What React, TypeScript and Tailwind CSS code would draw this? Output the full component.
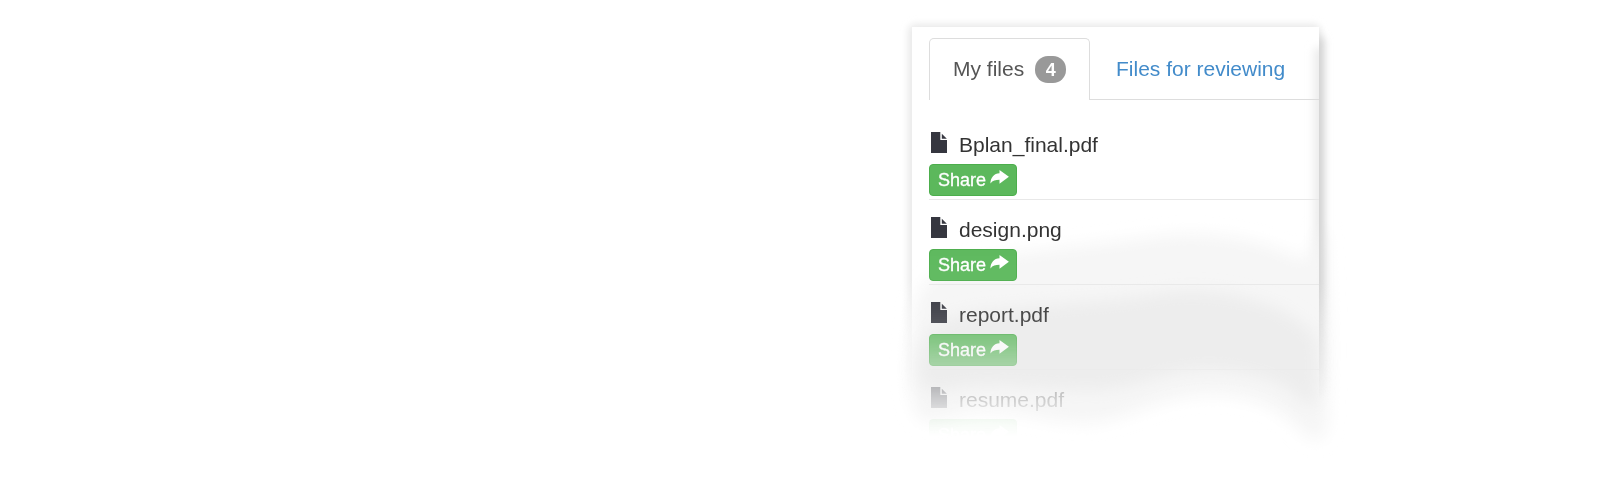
const files = ["Bplan_final.pdf", "design.png", "report.pdf", "resume.pdf"];

function FileIcon() {
  return (
    <svg className="mt-1 ml-0.5 h-[21px] w-4 shrink-0" viewBox="0 0 16 21" fill="#35363f">
      <path d="M0 0h9.3v8H16v13H0z" />
      <path d="M10.8 1.8 15.8 6.8h-5z" />
    </svg>
  );
}

function ShareIcon() {
  return (
    <svg className="-mt-1.5 h-3.5 w-[19px]" viewBox="0 0 19 14" fill="#fff">
      <path d="M9.5 0 18.9 6.8 9.5 13.8V9.8C5.5 9.8 2.7 10.4.4 13.4.7 7.6 4 3.5 9.5 3.3z" />
    </svg>
  );
}

function PaperBackdrop() {
  return (
    <svg className="pointer-events-none absolute inset-0 h-[500px] w-[1600px]" viewBox="0 0 1600 500">
      <defs>
        <filter id="b3" x="-20%" y="-20%" width="140%" height="140%"><feGaussianBlur stdDeviation="3.5" /></filter>
        <filter id="b4" x="-200%" y="-20%" width="500%" height="140%"><feGaussianBlur stdDeviation="4" /></filter>
        <filter id="b8" x="-20%" y="-30%" width="140%" height="160%"><feGaussianBlur stdDeviation="8" /></filter>
        <linearGradient id="fade" gradientUnits="userSpaceOnUse" x1="0" y1="280" x2="0" y2="400">
          <stop offset="0" stopColor="#fff" />
          <stop offset="1" stopColor="#000" />
        </linearGradient>
        <mask id="fadeMask" maskUnits="userSpaceOnUse" x="880" y="0" width="480" height="500">
          <rect x="880" y="0" width="480" height="500" fill="url(#fade)" />
        </mask>
        <clipPath id="paper"><rect x="912" y="27" width="407" height="400" /></clipPath>
        <clipPath id="rightSide"><rect x="1319" y="0" width="40" height="500" /></clipPath>
      </defs>
      <g mask="url(#fadeMask)">
        <rect x="908" y="24" width="413" height="400" rx="8" fill="#e9e9e9" filter="url(#b3)" />
        <rect x="912" y="27" width="407" height="400" fill="#fff" />
        <g clipPath="url(#paper)">
          <rect x="1314" y="48" width="20" height="390" fill="#ececec" filter="url(#b4)" />
        </g>
      </g>
      <path d="M911 330C913 290 925 276 955 265C1010 251 1100 244 1150 237C1205 229 1260 238 1296 257C1308 263 1313 250 1317 230L1325 230C1330 310 1330 370 1327 427C1323 446 1311 443 1299 429C1275 405 1250 396 1215 395C1160 395 1135 418 1095 423C1050 427 1015 408 980 411C950 413 932 427 920 419C907 405 906 370 911 330Z" fill="#f6f6f6" filter="url(#b8)" />
      <path d="M918 365C922 325 945 315 985 310C1055 303 1115 302 1160 293C1220 285 1285 301 1314 335C1321 350 1319 380 1315 404C1309 410 1299 397 1287 388C1260 374 1230 369 1205 370C1165 371 1138 388 1100 390C1050 391 1010 384 975 386C950 387 936 396 926 389C920 383 918 376 918 365Z" fill="#ededed" filter="url(#b8)" />
      <g mask="url(#fadeMask)">
        <g clipPath="url(#rightSide)">
          <rect x="1300" y="36" width="24" height="390" rx="6" fill="#d2d2d2" filter="url(#b4)" />
        </g>
      </g>
    </svg>
  );
}

export default function App() {
  return (
    <main className="relative h-[500px] w-[1600px] overflow-hidden bg-white font-['Liberation_Sans',Arial,sans-serif] text-[21px] leading-[30px]">
      <PaperBackdrop />
      <section className="relative ml-[929px] w-[390px] pt-[38px] [mask-image:linear-gradient(to_bottom,#000_230px,rgb(0_0_0/.94)_300px,rgb(0_0_0/.83)_328px,rgb(0_0_0/.48)_366px,rgb(0_0_0/.3)_387px,rgb(0_0_0/.14)_408px,rgb(0_0_0/.06)_420px,transparent_437px)]">
        <nav className="flex h-[62px]">
          <div className="flex w-[161px] items-center rounded-t-[5px] border border-b-0 border-[#ddd] pl-[22px] text-[#555]">
            <span className="-mt-0.5 ml-px">My files</span>
            <span className="ml-[11px] flex h-[27px] w-[31px] items-center justify-center rounded-[13px] bg-[#999] text-[18px] font-bold text-white">4</span>
          </div>
          <a className="flex flex-1 items-center border-b border-[#ddd] pl-[26px] text-[#428bca]">Files for reviewing</a>
        </nav>
        <ul className="pt-[15px]">
          {files.map((file) => (
            <li key={file} className="flex h-[85px] flex-col border-b border-[#e8e8e8] pt-[13px]">
              <div className="flex h-9">
                <FileIcon />
                <span className="ml-3 pt-0.5 text-[#333]">{file}</span>
              </div>
              <button className="flex h-8 w-[88px] shrink-0 items-center gap-1 rounded-[4px] border border-[#4cae4c] bg-[#5cb85c] pl-2 text-[18px] leading-none text-white [-webkit-text-stroke:0.3px_white]">
                <span>Share</span>
                <ShareIcon />
              </button>
            </li>
          ))}
        </ul>
      </section>
    </main>
  );
}
